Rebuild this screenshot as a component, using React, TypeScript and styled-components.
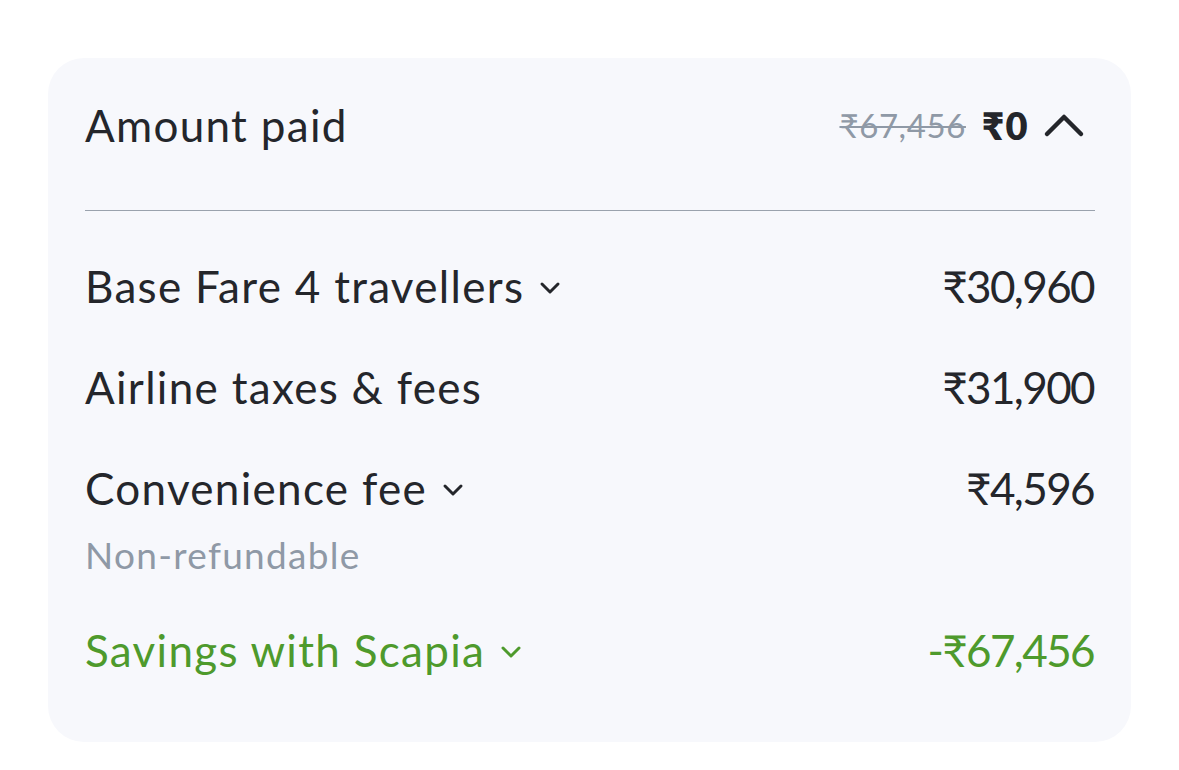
import React from "react";
import styled, { createGlobalStyle } from "styled-components";

const Global = createGlobalStyle`
  html, body { margin: 0; padding: 0; background: #ffffff; }
  body { font-family: "Lato", "Noto Sans", "DejaVu Sans", sans-serif; }
`;

const Page = styled.div`
  padding: 58px 48px 29px 48px;
`;

const Card = styled.div`
  background: #f7f8fc;
  border-radius: 36px;
  padding: 40px 36px 65px 37px;
  color: #24262b;
  letter-spacing: 1.3px;
`;

const Header = styled.div`
  display: flex;
  align-items: center;
  justify-content: space-between;
  height: 54px;
`;

const Title = styled.div`
  font-size: 44px;
  line-height: 54px;
`;

const HeaderRight = styled.div`
  display: flex;
  align-items: center;
  gap: 16px;
  margin-right: 10px;
`;

const Struck = styled.span`
  font-size: 33px;
  letter-spacing: 0.6px;
  color: #8f99a6;
  text-decoration: line-through;
  text-decoration-thickness: 2px;
`;

const Total = styled.span`
  font-size: 38px;
  font-weight: 800;
  letter-spacing: 1.5px;
  margin-right: -2px;
`;

const Divider = styled.hr`
  border: none;
  height: 1px;
  background: #9aa2ad;
  margin: 58px 0 48px 0;
`;

const List = styled.div`
  display: flex;
  flex-direction: column;
  gap: 47px;
`;

const Row = styled.div<{ $green?: boolean }>`
  display: flex;
  align-items: center;
  justify-content: space-between;
  font-size: 44px;
  line-height: 54px;
  color: ${(p) => (p.$green ? "#4e9a2c" : "#24262b")};
`;

const Label = styled.div`
  display: flex;
  align-items: center;
  gap: 15px;
`;

const Amount = styled.span`
  letter-spacing: -1.6px;
  margin-right: 1px;
`;

const Item = styled.div`
  display: flex;
  flex-direction: column;
  gap: 19px;
`;

const Sub = styled.div`
  font-size: 37px;
  line-height: 42px;
  color: #8f99a6;
`;

const Down = ({ color }: { color: string }) => (
  <svg width="22" height="14" viewBox="0 0 22 14" style={{ marginTop: 4 }}>
    <path d="M3 3 L11 11 L19 3" fill="none" stroke={color} strokeWidth="3" strokeLinecap="round" strokeLinejoin="round" />
  </svg>
);

const Up = () => (
  <svg width="42" height="26" viewBox="0 0 42 26">
    <path d="M4 22 L21 5 L38 22" fill="none" stroke="#24262b" strokeWidth="4.5" strokeLinecap="round" strokeLinejoin="round" />
  </svg>
);

export default function App() {
  return (
    <>
      <Global />
      <Page>
        <Card>
          <Header>
            <Title>Amount paid</Title>
            <HeaderRight>
              <Struck>₹67,456</Struck>
              <Total>₹0</Total>
              <Up />
            </HeaderRight>
          </Header>
          <Divider />
          <List>
            <Row>
              <Label>
                Base Fare 4 travellers <Down color="#24262b" />
              </Label>
              <Amount>₹30,960</Amount>
            </Row>
            <Row>
              <Label>Airline taxes &amp; fees</Label>
              <Amount>₹31,900</Amount>
            </Row>
            <Item>
              <Row>
                <Label>
                  Convenience fee <Down color="#24262b" />
                </Label>
                <Amount>₹4,596</Amount>
              </Row>
              <Sub>Non-refundable</Sub>
            </Item>
            <Row $green>
              <Label>
                Savings with Scapia <Down color="#4e9a2c" />
              </Label>
              <Amount>-₹67,456</Amount>
            </Row>
          </List>
        </Card>
      </Page>
    </>
  );
}
